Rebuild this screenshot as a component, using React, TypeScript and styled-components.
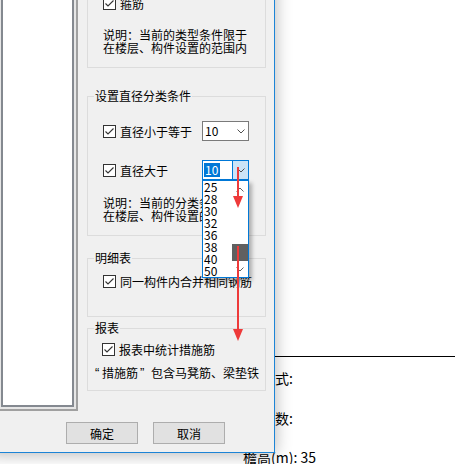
import React from "react";
import styled, { createGlobalStyle } from "styled-components";

const FONT = `"Noto Sans CJK SC", "Noto Sans", sans-serif`;

const GlobalStyle = createGlobalStyle`
  html, body { margin: 0; padding: 0; background: #ffffff; }
  body { font-family: ${FONT}; }
`;

const Page = styled.div`
  position: relative;
  width: 455px;
  height: 464px;
  overflow: hidden;
  background: #ffffff;
  font-family: ${FONT};
  color: #000;
`;

const Backdrop = styled.div`
  display: flex;
  flex-direction: column;
  padding-top: 356px;
`;

const Rule = styled.div`
  height: 1px;
  background: #000;
  margin-left: 240px;
`;

const BackLine = styled.div<{ $indent: number; $gap: number }>`
  margin-left: ${(p) => p.$indent}px;
  margin-top: ${(p) => p.$gap}px;
  font-size: 14px;
  line-height: 16px;
  white-space: nowrap;
`;

const Dialog = styled.div`
  position: absolute;
  left: -12px;
  top: -41px;
  width: 287px;
  box-sizing: border-box;
  background: #f0f0f0;
  border: 1px solid #1c84d6;
  box-shadow: 0 1px 16px rgba(0, 0, 0, 0.3);
  padding: 8px;
  display: flex;
  flex-direction: column;
  font-size: 12px;
  line-height: 13px;
  z-index: 2;
`;

const MainRow = styled.div`
  display: flex;
  gap: 9px;
  height: 443px;
`;

const LeftFrame = styled.div`
  width: 81px;
  box-sizing: border-box;
  border: 2px solid #a0a0a0;
  padding: 2px;
  background: #e6e6e6;
  display: flex;
`;

const ListArea = styled.div`
  flex: 1;
  background: #ffffff;
  border: 2px solid #848990;
`;

const RightColumn = styled.div`
  width: 179px;
  display: flex;
  flex-direction: column;
`;

const GroupBox = styled.div<{ $mt: number; $pt: number; $pb: number; $pl: number }>`
  position: relative;
  border: 1px solid #dcdcdc;
  margin-top: ${(p) => p.$mt}px;
  padding: ${(p) => p.$pt}px 0 ${(p) => p.$pb}px ${(p) => p.$pl}px;
  display: flex;
  flex-direction: column;
`;

const GroupTitle = styled.div`
  position: absolute;
  top: -8px;
  left: 6px;
  padding: 0 1px;
  background: #f0f0f0;
  line-height: 13px;
  white-space: nowrap;
`;

const CheckRow = styled.div<{ $mt?: number; $indent?: number }>`
  display: flex;
  align-items: center;
  gap: 4px;
  height: 13px;
  margin-top: ${(p) => p.$mt ?? 0}px;
  margin-left: ${(p) => p.$indent ?? 0}px;
  white-space: nowrap;
`;

const Box = styled.span`
  width: 13px;
  height: 13px;
  box-sizing: border-box;
  border: 1px solid #333333;
  background: #ffffff;
  display: inline-flex;
  flex-shrink: 0;
`;

const Note = styled.div<{ $mt: number }>`
  margin-top: ${(p) => p.$mt}px;
  line-height: 13px;
  white-space: nowrap;
`;

const NoteLine = styled.span`
  display: block;
`;

const Quote = styled.span<{ $w: number; $pl: number }>`
  display: inline-block;
  width: ${(p) => p.$w}px;
  padding-left: ${(p) => p.$pl}px;
  box-sizing: border-box;
  font-family: "Liberation Sans", Arial, sans-serif;
  font-size: 13px;
  vertical-align: top;
`;

const ComboGrid = styled.div<{ $mt?: number }>`
  display: grid;
  grid-template-columns: 99px 47px;
  align-items: center;
  height: 20px;
  margin-top: ${(p) => p.$mt ?? 0}px;
`;

const Combo = styled.div<{ $open?: boolean }>`
  position: relative;
  width: 47px;
  height: 20px;
  box-sizing: border-box;
  border: 1px solid ${(p) => (p.$open ? "#0078d7" : "#7a7a7a")};
  background: #ffffff;
  display: flex;
  align-items: center;
`;

const ComboText = styled.span`
  flex: 1;
  padding-left: 2px;
  line-height: 14px;
`;

const Selected = styled.span`
  flex: 0 0 auto;
  margin-left: 1px;
  margin-right: auto;
  padding: 0 2px 0 1px;
  background: #0078d7;
  color: #ffffff;
  line-height: 14px;
`;

const ComboButton = styled.span<{ $open?: boolean }>`
  width: 16px;
  height: 100%;
  box-sizing: border-box;
  display: flex;
  align-items: center;
  justify-content: center;
  background: ${(p) => (p.$open ? "#cce4f7" : "transparent")};
  border-left: 1px solid ${(p) => (p.$open ? "#0078d7" : "transparent")};
`;

const Dropdown = styled.div`
  position: absolute;
  top: calc(100% + 1px);
  left: -1px;
  width: 47px;
  box-sizing: border-box;
  border: 1px solid #0078d7;
  background: #ffffff;
  display: flex;
  box-shadow: 3px 3px 4px rgba(0, 0, 0, 0.28);
  z-index: 10;
`;

const Items = styled.div`
  flex: 1;
  display: flex;
  flex-direction: column;
`;

const Item = styled.div`
  height: 12px;
  line-height: 12px;
  padding-left: 1px;
`;

const ScrollBar = styled.div`
  width: 16px;
  display: flex;
  flex-direction: column;
`;

const ScrollButton = styled.div`
  height: 16px;
  display: flex;
  align-items: center;
  justify-content: center;
`;

const Track = styled.div`
  flex: 1;
  display: flex;
  flex-direction: column;
  justify-content: flex-end;
`;

const Thumb = styled.div`
  height: 17px;
  background: #606060;
`;

const ButtonRow = styled.div`
  display: flex;
  justify-content: flex-end;
  gap: 15px;
  margin-top: 11px;
  padding-right: 41px;
`;

const Button = styled.button`
  width: 72px;
  height: 22px;
  box-sizing: border-box;
  border: 1px solid #adadad;
  background: #e1e1e1;
  font-family: ${FONT};
  font-size: 12px;
  color: #000;
  padding: 0;
  display: flex;
  align-items: center;
  justify-content: center;
`;

const Annotation = styled.svg`
  position: absolute;
  left: 226px;
  top: 160px;
  z-index: 20;
  pointer-events: none;
`;

const Check = () => (
  <Box>
    <svg width="11" height="11" viewBox="0 0 11 11">
      <polyline points="1.5,5.5 4,8 9.5,2.5" fill="none" stroke="#333" strokeWidth="1.1" />
    </svg>
  </Box>
);

const Chevron = ({ up, color = "#505050" }: { up?: boolean; color?: string }) => (
  <svg width="8" height="5" viewBox="0 0 8 5">
    <polyline
      points={up ? "0.5,4.5 4,1 7.5,4.5" : "0.5,0.5 4,4 7.5,0.5"}
      fill="none"
      stroke={color}
      strokeWidth="1"
    />
  </svg>
);

const ITEMS = ["25", "28", "30", "32", "36", "38", "40", "50"];

export default function App() {
  return (
    <Page>
      <GlobalStyle />
      <Backdrop>
        <Rule />
        <BackLine $indent={261} $gap={13}>形式:</BackLine>
        <BackLine $indent={261} $gap={24}>系数:</BackLine>
        <BackLine $indent={243} $gap={23}>檐高(m): 35</BackLine>
      </Backdrop>

      <Dialog>
        <MainRow>
          <LeftFrame>
            <ListArea />
          </LeftFrame>
          <RightColumn>
            <GroupBox $mt={0} $pt={13} $pb={13} $pl={15}>
              <GroupTitle>设置类型条件</GroupTitle>
              <CheckRow>
                <Check />
                纵筋
              </CheckRow>
              <CheckRow $mt={2}>
                <Check />
                箍筋
              </CheckRow>
              <Note $mt={18}>
                <NoteLine>说明：当前的类型条件限于</NoteLine>
                <NoteLine>在楼层、构件设置的范围内</NoteLine>
              </Note>
            </GroupBox>

            <GroupBox $mt={28} $pt={24} $pb={13} $pl={15}>
              <GroupTitle>设置直径分类条件</GroupTitle>
              <ComboGrid>
                <CheckRow>
                  <Check />
                  直径小于等于
                </CheckRow>
                <Combo>
                  <ComboText>10</ComboText>
                  <ComboButton>
                    <Chevron />
                  </ComboButton>
                </Combo>
              </ComboGrid>
              <ComboGrid $mt={19}>
                <CheckRow>
                  <Check />
                  直径大于
                </CheckRow>
                <Combo $open>
                  <Selected>10</Selected>
                  <ComboButton $open>
                    <Chevron />
                  </ComboButton>
                  <Dropdown>
                    <Items>
                      {ITEMS.map((v) => (
                        <Item key={v}>{v}</Item>
                      ))}
                    </Items>
                    <ScrollBar>
                      <ScrollButton>
                        <Chevron up color="#606060" />
                      </ScrollButton>
                      <Track>
                        <Thumb />
                      </Track>
                      <ScrollButton>
                        <Chevron color="#606060" />
                      </ScrollButton>
                    </ScrollBar>
                  </Dropdown>
                </Combo>
              </ComboGrid>
              <Note $mt={16}>
                <NoteLine>说明：当前的分类条件限于</NoteLine>
                <NoteLine>在楼层、构件设置的范围内</NoteLine>
              </Note>
            </GroupBox>

            <GroupBox $mt={22} $pt={16} $pb={28} $pl={15}>
              <GroupTitle>明细表</GroupTitle>
              <CheckRow>
                <Check />
                同一构件内合并相同钢筋
              </CheckRow>
            </GroupBox>

            <GroupBox $mt={11} $pt={14} $pb={11} $pl={7}>
              <GroupTitle>报表</GroupTitle>
              <CheckRow $indent={7}>
                <Check />
                报表中统计措施筋
              </CheckRow>
              <Note $mt={10}>
                <Quote $w={7} $pl={0}>“</Quote>措施筋<Quote $w={13} $pl={2}>”</Quote>包含马凳筋、梁垫铁
              </Note>
            </GroupBox>
          </RightColumn>
        </MainRow>
        <ButtonRow>
          <Button>确定</Button>
          <Button>取消</Button>
        </ButtonRow>
      </Dialog>

      <Annotation width="24" height="185" viewBox="226 160 24 185">
        <line x1="238" y1="167" x2="238" y2="198" stroke="#ee3a3a" strokeWidth="2" />
        <polygon points="233,196 243,196 238,208" fill="#ee3a3a" />
        <line x1="238" y1="246" x2="238" y2="331" stroke="#ee3a3a" strokeWidth="2" />
        <polygon points="233,329 243,329 238,341" fill="#ee3a3a" />
      </Annotation>
    </Page>
  );
}
